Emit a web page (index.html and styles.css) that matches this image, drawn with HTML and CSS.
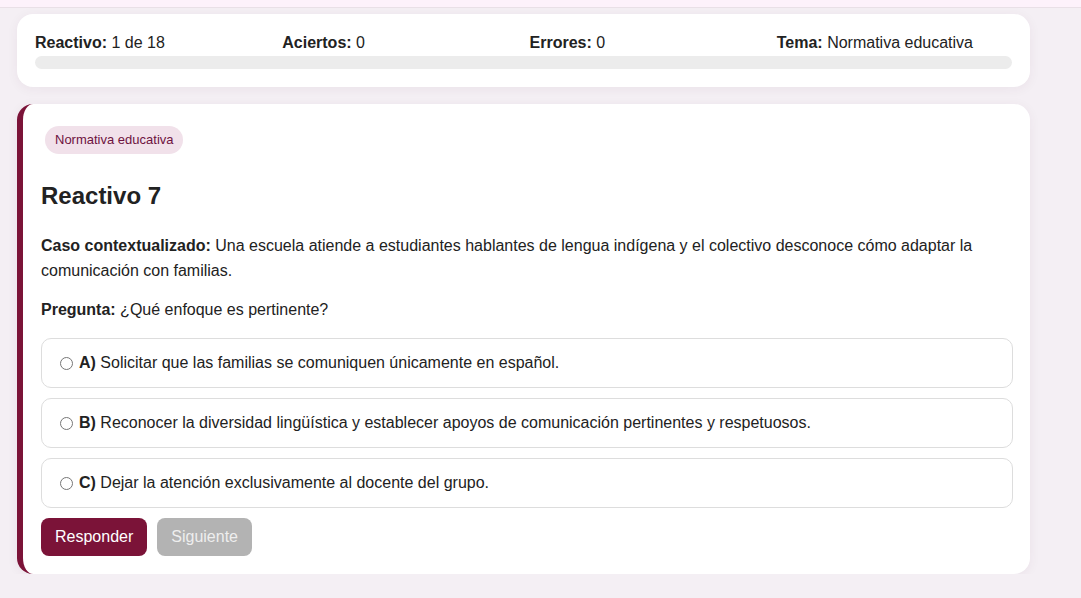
FILE: index.html
```html
<!DOCTYPE html>
<html lang="es">
<head>
    <meta charset="UTF-8">
    <meta name="viewport" content="width=device-width, initial-scale=1.0">
    <title>Reactivos - Normativa educativa</title>
    <link rel="stylesheet" href="styles.css">
</head>
<body>
    <div class="topbar"></div>
    <main class="quiz">
        <section class="stats">
            <div class="stats-row">
                <div><b>Reactivo:</b> 1 de 18</div>
                <div><b>Aciertos:</b> 0</div>
                <div><b>Errores:</b> 0</div>
                <div><b>Tema:</b> Normativa educativa</div>
            </div>
            <div class="progress"><div class="progress-fill" style="width: 0%;"></div></div>
        </section>

        <section class="question">
            <span class="badge">Normativa educativa</span>
            <h2>Reactivo 7</h2>
            <p><b>Caso contextualizado:</b> Una escuela atiende a estudiantes hablantes de lengua indígena y el colectivo desconoce cómo adaptar la comunicación con familias.</p>
            <p><b>Pregunta:</b> ¿Qué enfoque es pertinente?</p>

            <div class="options">
                <label class="option"><input type="radio" name="resp" value="A"><span><b>A)</b> Solicitar que las familias se comuniquen únicamente en español.</span></label>
                <label class="option"><input type="radio" name="resp" value="B"><span><b>B)</b> Reconocer la diversidad lingüística y establecer apoyos de comunicación pertinentes y respetuosos.</span></label>
                <label class="option"><input type="radio" name="resp" value="C"><span><b>C)</b> Dejar la atención exclusivamente al docente del grupo.</span></label>
            </div>

            <div class="actions">
                <button class="btn btn-primary">Responder</button>
                <button class="btn btn-disabled" disabled>Siguiente</button>
            </div>
        </section>
    </main>
</body>
</html>
```

FILE: styles.css
```css
body {
    margin: 0;
    font-family: "Liberation Sans", Arial, sans-serif;
    font-size: 16px;
    color: #222;
    background: #f4eff4;
}
.topbar {
    height: 7px;
    background: #fdf2fb;
    border-bottom: 1px solid #e9e0e7;
}
.quiz {
    width: 1013px;
    margin: 6px 0 0 17px;
}
.stats {
    background: #fff;
    border-radius: 16px;
    padding: 20px 18px 18px;
    box-shadow: 0 2px 12px rgba(80, 40, 70, 0.06);
}
.stats-row {
    display: grid;
    grid-template-columns: repeat(4, 1fr);
    gap: 12px;
    line-height: 18px;
}
.progress {
    margin-top: 4px;
    height: 13px;
    background: #ececec;
    border-radius: 7px;
    overflow: hidden;
}
.progress-fill {
    height: 100%;
    background: #7b1338;
}
.question {
    margin-top: 17px;
    background: #fff;
    border-left: 6px solid #7b1338;
    border-radius: 16px;
    padding: 22px 17px 18px 18px;
    box-shadow: 0 2px 12px rgba(80, 40, 70, 0.06);
}
.badge {
    display: inline-block;
    margin-left: 4px;
    padding: 7px 9px 7px 10px;
    font-size: 13px;
    line-height: 14px;
    color: #6e1240;
    background: #f1e1ea;
    border-radius: 14px;
}
h2 {
    margin: 28px 0 23px;
    font-size: 24px;
    line-height: 28px;
    color: #222;
}
p {
    margin: 0 0 14px;
    line-height: 25px;
}
.options {
    display: flex;
    flex-direction: column;
    gap: 10px;
    margin-top: 16px;
}
.option {
    display: flex;
    align-items: center;
    padding: 15px 18px;
    border: 1px solid #ddd;
    border-radius: 10px;
    line-height: 18px;
    cursor: pointer;
}
.option input {
    margin: 0 6px 0 0;
    width: 13px;
    height: 13px;
}
.actions {
    display: flex;
    gap: 10px;
    margin-top: 10px;
}
.btn {
    font-family: inherit;
    font-size: 16px;
    line-height: 18px;
    padding: 10px 14px;
    border: none;
    border-radius: 8px;
    color: #fff;
    cursor: pointer;
}
.btn-primary {
    background: #7b1338;
}
.btn-disabled {
    background: #b3b3b3;
    color: #eee;
    cursor: default;
}
```
